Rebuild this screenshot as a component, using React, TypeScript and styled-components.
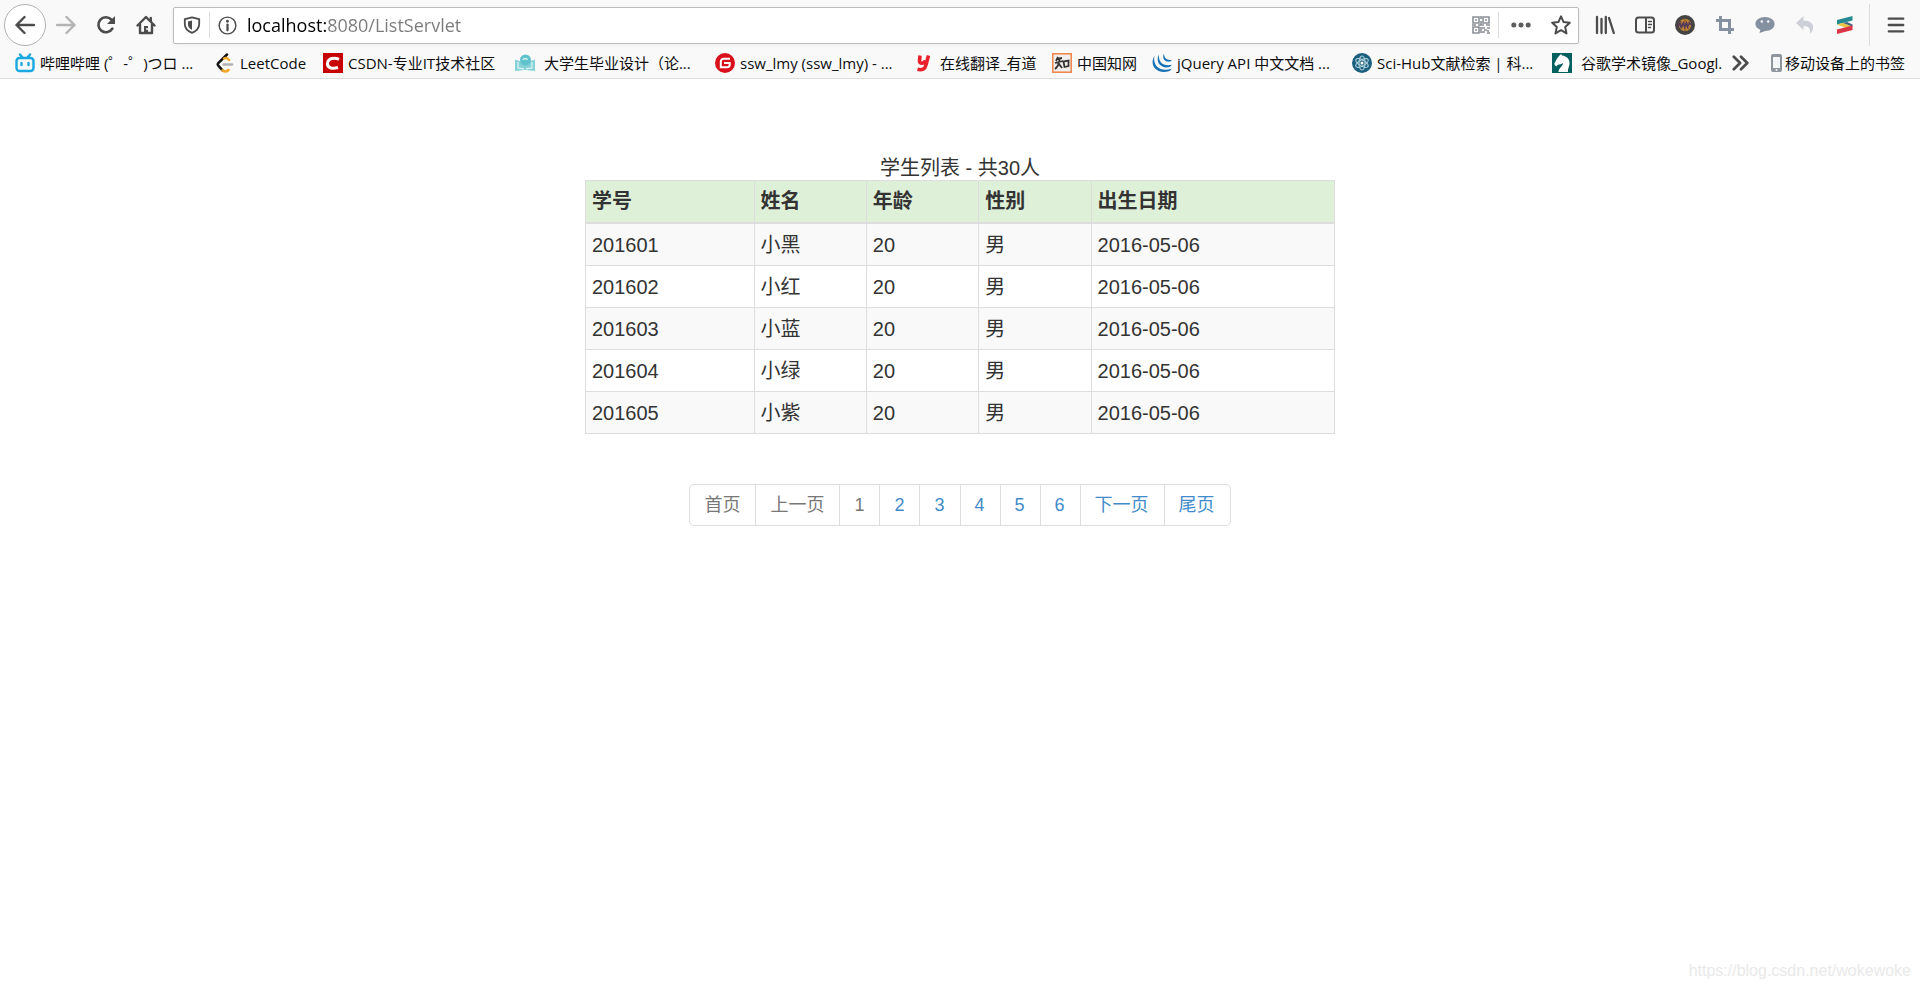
import React from "react";
import styled, { createGlobalStyle } from "styled-components";

const uiFont = `"Open Sans", "Noto Sans CJK SC", sans-serif`;
const pageFont = `"Liberation Sans", "Noto Sans CJK SC", sans-serif`;

const GlobalStyle = createGlobalStyle`
  *, *::before, *::after { box-sizing: border-box; }
  body { margin: 0; background: #fff; color: #333; font-family: ${pageFont}; }
`;

const Shell = styled.div`
  display: flex;
  flex-direction: column;
  min-height: 100vh;
`;

/* ---------- browser chrome ---------- */

const Chrome = styled.header`
  background: #f9f9fa;
  border-bottom: 1px solid #ddd;
  font-family: ${uiFont};
  color: #0c0c0d;
`;

const NavBar = styled.div`
  display: flex;
  align-items: center;
  height: 50px;
  padding: 0 4px;
`;

const ToolButton = styled.button<{ $faded?: boolean }>`
  display: flex;
  align-items: center;
  justify-content: center;
  flex: none;
  width: 40px;
  height: 40px;
  padding: 0;
  border: 0;
  background: none;
  color: ${(p) => (p.$faded ? "#b4b4b5" : "#4c4c4d")};
`;

const BackButton = styled(ToolButton)`
  width: 42px;
  height: 42px;
  border: 1px solid #b1b1b1;
  border-radius: 50%;
  background: #fff;
`;

const UrlBar = styled.div`
  display: flex;
  align-items: center;
  flex: 1;
  min-width: 0;
  height: 37px;
  margin: 0 6px 0 7px;
  background: #fff;
  border: 1px solid #bcbcbc;
  border-radius: 2px;
  box-shadow: 0 1px 4px rgba(0, 0, 0, 0.05);
`;

const UrlButton = styled(ToolButton)<{ $wide?: boolean }>`
  width: ${(p) => (p.$wide ? 44 : 35)}px;
  height: 35px;
`;

const Divider = styled.span<{ $tall?: boolean }>`
  flex: none;
  width: 1px;
  height: ${(p) => (p.$tall ? 42 : 26)}px;
  margin: ${(p) => (p.$tall ? "0 6px 0 4px" : "0")};
  background: #dcdcdc;
`;

const UrlInput = styled.input`
  flex: 1;
  min-width: 0;
  height: 34px;
  padding: 0 0 0 2px;
  border: 0;
  outline: 0;
  font: 18px/34px ${uiFont};
  color: #000;
  background: linear-gradient(90deg, #000 81px, #7a7a7a 81px);
  background-clip: text;
  -webkit-background-clip: text;
  -webkit-text-fill-color: transparent;
`;

const Bookmarks = styled.nav`
  display: flex;
  align-items: center;
  height: 28px;
  padding: 0 15px 2px;
  font-size: 15px;
  line-height: 24px;
`;

const BookmarkLink = styled.a<{ $width: number }>`
  display: flex;
  align-items: center;
  gap: 5px;
  flex: 0 0 ${(p) => p.$width}px;
  min-width: 0;
  overflow: hidden;
  white-space: pre;
  color: #0c0c0d;
  text-decoration: none;
  svg { flex: none; }
`;

const MoreButton = styled(ToolButton)`
  width: 36px;
  height: 26px;
`;

const MobileLink = styled(BookmarkLink)`
  flex: 0 0 auto;
  gap: 0;
  margin-left: auto;
`;

/* ---------- page ---------- */

const Main = styled.main`
  display: flex;
  flex-direction: column;
  align-items: center;
  gap: 50px;
  padding-top: 77px;
`;

const Table = styled.table`
  width: 750px;
  max-width: 100%;
  table-layout: fixed;
  border-collapse: collapse;
  font-size: 20px;
  line-height: 31px;
`;

const Caption = styled.caption`
  line-height: 24px;
  text-align: center;
`;

const HeadCell = styled.th<{ $width: string }>`
  width: ${(p) => p.$width};
  height: 42px;
  padding: 5px 6px 4px;
  border: 1px solid #ddd;
  border-bottom-width: 2px;
  background: #dff0d8;
  text-align: left;
`;

const Row = styled.tr`
  &:nth-child(odd) { background: #f9f9f9; }
`;

const Cell = styled.td`
  padding: 6px 6px 4px;
  border: 1px solid #ddd;
`;

const Pager = styled.ul`
  display: flex;
  margin: 0;
  padding: 0;
  list-style: none;
`;

const PagerItem = styled.li`
  & + & { margin-left: -1px; }
  &:first-child a { border-radius: 5px 0 0 5px; }
  &:last-child a { border-radius: 0 5px 5px 0; }
`;

const PagerLink = styled.a<{ $muted: boolean }>`
  display: block;
  padding: 7px 15px 7px 14px;
  border: 1px solid #ddd;
  background: #fff;
  color: ${(p) => (p.$muted ? "#777" : "#428bca")};
  font-size: 18px;
  line-height: 26px;
  text-decoration: none;
`;

const Watermark = styled.footer`
  margin-top: auto;
  padding: 0 9px 6px;
  color: #e9e9e9;
  font-size: 16px;
  line-height: 24px;
  text-align: right;
`;

/* ---------- icons ---------- */

type IconProps = { size?: number; children: React.ReactNode; width?: number };

const Icon = ({ size = 20, width = 2, children }: IconProps) => (
  <svg
    width={size}
    height={size}
    viewBox="0 0 20 20"
    fill="none"
    stroke="currentColor"
    strokeWidth={width}
    strokeLinecap="round"
    strokeLinejoin="round"
    aria-hidden="true"
  >
    {children}
  </svg>
);

const ArrowLeft = () => (
  <Icon width={2.4}><path d="M19 10H1.5M9.5 2 1.5 10l8 8" /></Icon>
);
const ArrowRight = () => (
  <Icon width={2.4}><path d="M1 10h17.500M10.500 2l8 8-8 8" /></Icon>
);
const Reload = () => (
  <Icon width={2.6}>
    <path d="M16.400 13.500A7.500 7.500 0 1 1 15.300 4.500" />
    <path d="M19 1v8h-8z" fill="currentColor" stroke="none" />
  </Icon>
);
const Home = () => (
  <Icon width={2.4}>
    <path d="M1.500 10.500 10 2l8.500 8.500M4 9.500V18h12V9.500" />
    <path d="M8 11h4v7H8z" fill="currentColor" stroke="none" />
    <path d="M14.800 3v3" />
    <circle cx="10.800" cy="14" r=".6" stroke="#f9f9fa" strokeWidth="1" />
  </Icon>
);
const Shield = () => (
  <Icon size={18} width={2}>
    <path d="M10 1.500 2 3.500v5.500c0 4.500 3 7.800 8 9.800 5-2 8-5.300 8-9.800V3.500z" />
    <path d="M10 5 5.500 6v3.500c0 2.500 1.500 4.500 4.500 6z" fill="currentColor" stroke="none" />
  </Icon>
);
const Info = () => (
  <Icon size={19} width={1.5}>
    <circle cx="10" cy="10" r="8.800" />
    <path d="M10 9v6" strokeWidth="2.400" />
    <circle cx="10" cy="5.500" r="1.500" fill="currentColor" stroke="none" />
  </Icon>
);
const QrCode = () => (
  <svg width="18" height="18" viewBox="0 0 18 18" fill="none" stroke="#8a8f98" strokeWidth="1.6" aria-hidden="true">
    <path d="M1 1h6v6H1zM11 1h6v6h-6zM1 11h6v6H1z" />
    <path d="M3 4h2M13 4h2M3 14h2M9 0v3M9 5v4M0 9h4M6 9h6M14 9h4M10 12h3M15 12h3M12 14h3M10 16h3M15 17h3M16 14v2M9 11v6" />
  </svg>
);
const Dots = () => (
  <svg width="20" height="6" viewBox="0 0 20 6" fill="#5c5c5d" aria-hidden="true">
    <circle cx="2.800" cy="3" r="2.500" /><circle cx="10" cy="3" r="2.500" /><circle cx="17.200" cy="3" r="2.500" />
  </svg>
);
const Star = () => (
  <Icon>
    <path d="m10 1.300 2.600 5.800 6.200.7-4.600 4.300 1.300 6.300L10 15.200l-5.500 3.200 1.300-6.300L1.200 7.800l6.200-.7z" />
  </Icon>
);
const Library = () => (
  <Icon width={2.3}><path d="M2 2v16M6.500 4v14M10.800 2v16M14 3l4.800 15" /></Icon>
);
const Sidebar = () => (
  <Icon>
    <rect x="1" y="2.500" width="18" height="15" rx="2.500" />
    <path d="M11 3v14" />
    <path d="M13.500 6.500h3M13.500 9.500h3M13.500 12.500h2" strokeWidth="1.300" />
  </Icon>
);
const Ball = () => (
  <svg width="20" height="20" viewBox="0 0 20 20" aria-hidden="true">
    <circle cx="10" cy="10" r="10" fill="#454443" />
    <circle cx="10" cy="10" r="6.200" fill="#c08638" />
    <path d="M10 4v12M5.500 6c3 3 3 6 0 8.500M14.500 6c-3 3-3 6 0 8.500" stroke="#78502c" fill="none" />
    <path d="m3 12 2-4 1 4 2.500-4 1 4 2-4 1 4 2-4 2 2" stroke="#51385f" strokeWidth="1.500" fill="none" />
  </svg>
);
const Crop = () => (
  <svg width="18" height="18" viewBox="0 0 18 18" fill="none" stroke="#8590a0" strokeWidth="3" aria-hidden="true">
    <path d="M0 4.500h13.500V18M4.500 0v13.500H18" />
  </svg>
);
const Chat = () => (
  <svg width="20" height="18" viewBox="0 0 20 18" aria-hidden="true">
    <path d="M10 1c5.500 0 9.600 3 9.600 7s-4 7-9.200 7L4.500 17l.8-3.200C2.300 12.700.4 10.600.4 8c0-4 4-7 9.600-7z" fill="#8590a0" />
    <circle cx="6.800" cy="5.500" r="1.200" fill="#f9f9fa" /><circle cx="13.200" cy="5.500" r="1.200" fill="#f9f9fa" />
  </svg>
);
const Undo = () => (
  <svg width="18" height="18" viewBox="0 0 18 18" fill="#cdd1d7" aria-hidden="true">
    <path d="M7.500 0v4.500C14 4.500 18 7.500 17 13c-.4 2-1.500 3.500-3 5 .8-5-1-8-6.500-8v4L0 7z" />
  </svg>
);
const StackS = () => (
  <svg width="16" height="18" viewBox="0 0 16 18" aria-hidden="true">
    <path d="M0 4 15.500 0v4.500L0 8.500z" fill="#258b91" />
    <path d="M0 8.500 6 7l9.500 3.500L9 12z" fill="#ecc548" />
    <path d="m6 7 4-1 5.500 2.500v2z" fill="#49607a" />
    <path d="M0 13.500 15.500 9.500V14L0 18z" fill="#dc3545" />
  </svg>
);
const Menu = () => <Icon size={18} width={2.6}><path d="M2 3h16M2 10h16M2 17h16" /></Icon>;
const Chevrons = () => (
  <Icon size={18} width={3}><path d="m2 3 7 7-7 7M10 3l7 7-7 7" /></Icon>
);

const Bilibili = () => (
  <svg width="20" height="20" viewBox="0 0 20 20" fill="none" stroke="#19a8df" strokeWidth="2.4" strokeLinecap="round" aria-hidden="true">
    <rect x="1.500" y="5" width="17" height="13" rx="3" />
    <path d="m5 1.500 2.500 3M15 1.500l-2.500 3M6.500 10v2M13.500 10v2" />
  </svg>
);
const LeetCode = () => (
  <svg width="20" height="20" viewBox="0 0 20 20" fill="none" strokeWidth="2.500" strokeLinecap="round" aria-hidden="true">
    <path d="m12 1.500-8.500 8.300c-1 1-1 2 0 3l4 4.500" stroke="#111" />
    <path d="M7.500 17.300c2 1.700 4 1.700 6-.3M9 5.500c2-1 3.500-.2 5 1.500" stroke="#f5a623" />
    <path d="M8.500 11.500h8.500" stroke="#b3b3b3" />
  </svg>
);
const Csdn = () => (
  <svg width="20" height="20" viewBox="0 0 20 20" aria-hidden="true">
    <path fill="#c70000" d="M0 0h20v20H0z" />
    <path d="M16 6.300C12 4.500 5 4.600 4.500 10.500c-.3 5 5.500 5.500 10.500 4" fill="none" stroke="#fff" strokeWidth="3" />
  </svg>
);
const Thesis = () => (
  <svg width="20" height="18" viewBox="0 0 20 18" aria-hidden="true">
    <path d="M0 5.500 10 9l10-3.500V17l-10-1-10 1z" fill="#85d1d8" />
    <circle cx="10.500" cy="6" r="5.500" fill="#5fc2cc" />
    <path d="M3 8v6l6 1M17 8v6l-6 1M8 6c.5-2 4-2 4.500 0" fill="none" stroke="#d6f1f3" strokeWidth="1.300" />
  </svg>
);
const Gitee = () => (
  <svg width="20" height="20" viewBox="0 0 20 20" aria-hidden="true">
    <circle cx="10" cy="10" r="10" fill="#d8101c" />
    <path d="M15 5.800H8.500a2.700 2.700 0 0 0-2.700 2.700v5.700h6.500a2.400 2.400 0 0 0 2.400-2.400V10H9" fill="none" stroke="#fff" strokeWidth="2" />
  </svg>
);
const Youdao = () => (
  <svg width="20" height="20" viewBox="0 0 20 20" fill="none" stroke="#e8212b" strokeWidth="3.600" aria-hidden="true">
    <path d="M5 2.500 4.500 8c-.1 3 4.500 3 6-.5M13.500 2.500 11 12c-.8 4-4 5.500-8.500 4.300" />
  </svg>
);
const Cnki = () => (
  <svg width="20" height="20" viewBox="0 0 20 20" fill="none" stroke="#333" strokeWidth="1.800" aria-hidden="true">
    <rect x=".8" y=".8" width="18.400" height="18.400" fill="#f1efec" stroke="#f08248" strokeWidth="1.500" />
    <path d="M6 4 4 8M5 6l5-1M3 10l8-2M7.500 6c0 5-1.500 7.500-4.500 10M7 11l3 4M11.500 8.500l1 5.500 4-1V7.500z" />
  </svg>
);
const JQuery = () => (
  <svg width="20" height="20" viewBox="0 0 20 20" fill="#1872b4" aria-hidden="true">
    <path d="M2.500 3C-3 12 4 21 16 18.500c2-.5 3-1.500 3.500-2.800C8 19.500.5 12.500 2.500 3z" />
    <path d="M7 1.500c-4 7 1.500 14 9.500 12.800 1.700-.3 2.700-1.300 3.200-2.500C12 13.800 6 9.500 7 1.500z" />
    <path d="M12 .8c-2.500 4.500 1 8.700 6 7.700 1-.3 1.500-.8 2-1.700-4.500 1-8-1.500-8-6z" />
  </svg>
);
const SciHub = () => (
  <svg width="20" height="20" viewBox="0 0 20 20" aria-hidden="true">
    <circle cx="10" cy="10" r="10" fill="#1c607f" />
    <g fill="none" stroke="#a8cbd6" strokeWidth="1.200">
      <ellipse cx="10" cy="10" rx="3" ry="7" />
      <ellipse cx="10" cy="10" rx="3" ry="7" transform="rotate(60 10 10)" />
      <ellipse cx="10" cy="10" rx="3" ry="7" transform="rotate(120 10 10)" />
    </g>
    <circle cx="10" cy="10" r="1.500" fill="#fff" />
  </svg>
);
const Horse = () => (
  <svg width="20" height="20" viewBox="0 0 20 20" aria-hidden="true">
    <path fill="#03605f" d="M0 0h20v20H0z" />
    <path d="m9 1 1 1.500c5 .5 8 4 7.500 8.500-.3 3-2 5-1.500 8H6.500c0-4 4.500-5.500 4.500-9-1.500 1.500-3.500 1.500-5 1.800L4 13.500 2.200 11 5 5.500l2.500-3z" fill="#fff" />
  </svg>
);
const Phone = () => (
  <svg width="15" height="20" viewBox="0 0 15 20" aria-hidden="true">
    <rect x="1" y="1" width="11" height="18" rx="2" fill="#8f959c" />
    <path d="M3 4h7v11H3z" fill="#f4f5f6" />
    <circle cx="6.500" cy="17" r="1" fill="#f4f5f6" />
  </svg>
);

/* ---------- data ---------- */

const bookmarks = [
  { title: "哔哩哔哩 (゜-゜)つロ ...", width: 200, icon: Bilibili },
  { title: "LeetCode", width: 108, icon: LeetCode },
  { title: "CSDN-专业IT技术社区", width: 192, icon: Csdn },
  { title: " 大学生毕业设计（论...", width: 200, icon: Thesis },
  { title: "ssw_lmy (ssw_lmy) - ...", width: 200, icon: Gitee },
  { title: "在线翻译_有道", width: 137, icon: Youdao },
  { title: "中国知网", width: 100, icon: Cnki },
  { title: "jQuery API 中文文档 ...", width: 200, icon: JQuery },
  { title: "Sci-Hub文献检索 | 科...", width: 200, icon: SciHub },
  { title: " 谷歌学术镜像_Googl.", width: 171, icon: Horse },
];

const extensions = [
  { label: "书库", icon: Library },
  { label: "侧栏", icon: Sidebar },
  { label: "主题", icon: Ball },
  { label: "截图", icon: Crop },
  { label: "聊天", icon: Chat },
  { label: "撤销", icon: Undo },
  { label: "扩展", icon: StackS },
];

const columns = [
  { title: "学号", width: "22.5%" },
  { title: "姓名", width: "15%" },
  { title: "年龄", width: "15%" },
  { title: "性别", width: "15%" },
  { title: "出生日期", width: "32.5%" },
];

const students = [
  ["201601", "小黑", "20", "男", "2016-05-06"],
  ["201602", "小红", "20", "男", "2016-05-06"],
  ["201603", "小蓝", "20", "男", "2016-05-06"],
  ["201604", "小绿", "20", "男", "2016-05-06"],
  ["201605", "小紫", "20", "男", "2016-05-06"],
];

const pages = ["首页", "上一页", "1", "2", "3", "4", "5", "6", "下一页", "尾页"];
const mutedPages = ["首页", "上一页", "1"];

export default function App() {
  return (
    <Shell>
      <GlobalStyle />
      <Chrome>
        <NavBar>
          <BackButton aria-label="后退"><ArrowLeft /></BackButton>
          <ToolButton $faded aria-label="前进"><ArrowRight /></ToolButton>
          <ToolButton aria-label="重新载入"><Reload /></ToolButton>
          <ToolButton aria-label="主页"><Home /></ToolButton>
          <UrlBar>
            <UrlButton aria-label="跟踪保护"><Shield /></UrlButton>
            <Divider />
            <UrlButton aria-label="网站信息"><Info /></UrlButton>
            <UrlInput aria-label="地址" defaultValue="localhost:8080/ListServlet" spellCheck={false} />
            <UrlButton aria-label="二维码"><QrCode /></UrlButton>
            <Divider />
            <UrlButton $wide aria-label="页面操作"><Dots /></UrlButton>
            <UrlButton aria-label="收藏"><Star /></UrlButton>
          </UrlBar>
          {extensions.map(({ label, icon: Glyph }) => (
            <ToolButton key={label} aria-label={label}><Glyph /></ToolButton>
          ))}
          <Divider $tall />
          <ToolButton aria-label="菜单"><Menu /></ToolButton>
        </NavBar>
        <Bookmarks aria-label="书签">
          {bookmarks.map(({ title, width, icon: Glyph }) => (
            <BookmarkLink key={title} href="#" $width={width}>
              <Glyph />
              <span>{title}</span>
            </BookmarkLink>
          ))}
          <MoreButton aria-label="更多书签"><Chevrons /></MoreButton>
          <MobileLink href="#" $width={0}>
            <Phone />
            <span>移动设备上的书签</span>
          </MobileLink>
        </Bookmarks>
      </Chrome>

      <Main>
        <Table>
          <Caption>学生列表 - 共30人</Caption>
          <thead>
            <tr>
              {columns.map((c) => (
                <HeadCell key={c.title} $width={c.width} scope="col">{c.title}</HeadCell>
              ))}
            </tr>
          </thead>
          <tbody>
            {students.map((s) => (
              <Row key={s[0]}>
                {s.map((value, i) => <Cell key={i}>{value}</Cell>)}
              </Row>
            ))}
          </tbody>
        </Table>
        <nav aria-label="分页">
          <Pager>
            {pages.map((p) => (
              <PagerItem key={p}>
                <PagerLink href="#" $muted={mutedPages.includes(p)}>{p}</PagerLink>
              </PagerItem>
            ))}
          </Pager>
        </nav>
      </Main>

      <Watermark>https://blog.csdn.net/wokewoke</Watermark>
    </Shell>
  );
}
